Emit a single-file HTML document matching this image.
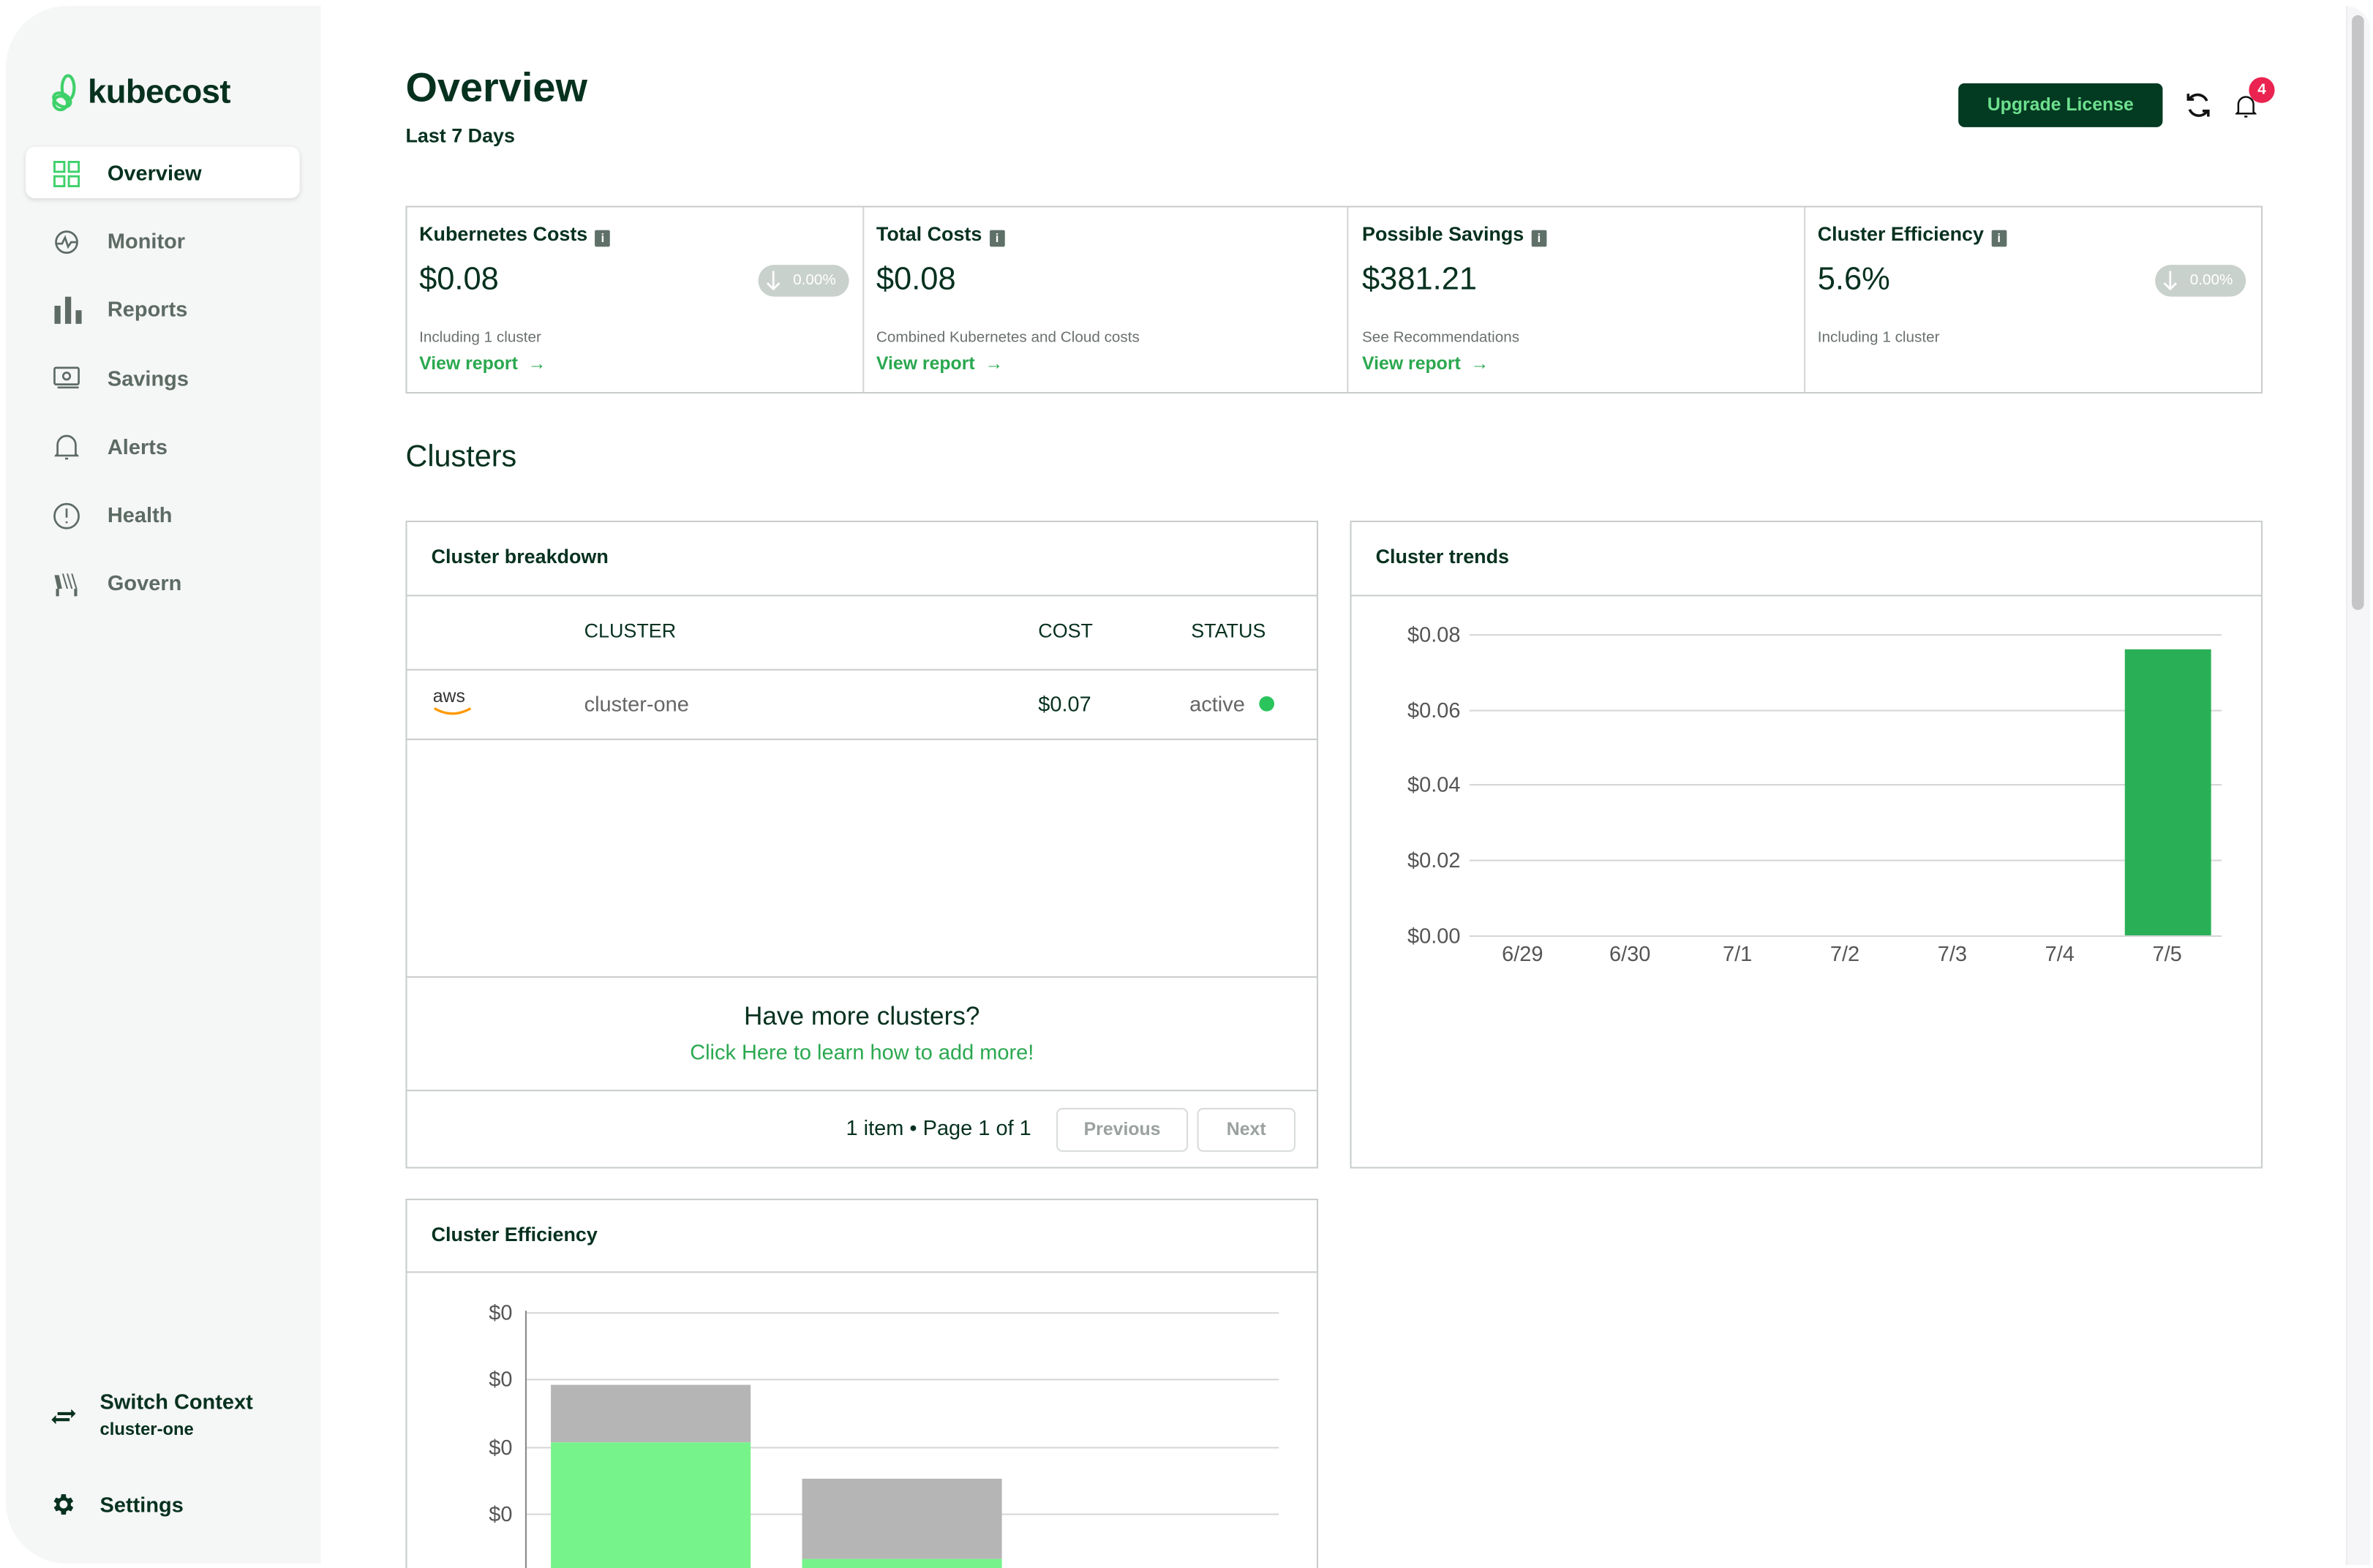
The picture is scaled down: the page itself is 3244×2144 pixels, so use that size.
<!DOCTYPE html>
<html><head><meta charset="utf-8">
<style>
*{margin:0;padding:0;box-sizing:border-box}
html,body{width:3244px;height:2144px;overflow:hidden;background:#fff}
#s{position:absolute;left:0;top:0;width:1568px;height:1036px;overflow:hidden;transform:scale(2.0689,2.0695);transform-origin:0 0;font-family:"Liberation Sans",sans-serif;color:#06311f}
.a{position:absolute;white-space:nowrap}
.sb{left:4px;top:4px;width:208px;height:1029px;background:#f5f6f6;border-radius:40px 0 0 40px}
.nav{font-size:14px;font-weight:bold;color:#5d6b64}
.b{border:1px solid #c9cdcb}
.ct{font-size:13px;font-weight:bold}
.val{font-size:21px}
.sub{font-size:10px;color:#6a716d}
.vr{font-size:12px;font-weight:bold;color:#2aa84f}
.pill{height:21px;width:60px;border-radius:11px;background:#c9d1cd;color:#fff;font-size:10px;line-height:21px;padding-left:23px}
.info{display:inline-block;width:10px;height:11px;background:#5f7068;color:#fff;font-size:8px;line-height:11px;text-align:center;vertical-align:-1px;margin-left:5px;border-radius:1px}
.yl{font-size:14px;color:#555;text-align:right;width:45px}
.xl{font-size:14px;color:#555;text-align:center;width:40px}
.g{height:1px;background:#d6d6d6}
</style></head><body><div id="s">
<div class="a sb"></div>
<div class="a" style="left:1550px;top:4px;width:16px;height:1030px;background:#f6f6f8;border-left:1px solid #ececee;border-radius:0 30px 0 0"></div>
<div class="a" style="left:1554px;top:10px;width:8px;height:393px;background:#c5c5c7;border-radius:4px"></div>
<svg class="a" style="left:33px;top:49px" width="20" height="26" viewBox="0 0 20 26"><g fill="none" stroke="#3ed16a" stroke-width="2"><ellipse cx="12" cy="9" rx="4" ry="8"/><ellipse cx="8" cy="17" rx="6" ry="4" transform="rotate(30 8 17)"/><circle cx="7" cy="19" r="4.5"/></g></svg>
<div class="a" style="left:58px;top:48px;font-size:22px;font-weight:bold;color:#06311f;letter-spacing:-0.3px">kubecost</div>
<div class="a" style="left:17px;top:97px;width:181px;height:34px;background:#fff;border-radius:6px;box-shadow:0 1px 3px rgba(0,0,0,.12)"></div>
<svg class="a" style="left:35px;top:106px" width="18" height="18" viewBox="0 0 18 18" fill="none" stroke="#3ed16a" stroke-width="1.4"><rect x="1" y="1" width="6.5" height="6.5"/><rect x="10.5" y="1" width="6.5" height="6.5"/><rect x="1" y="10.5" width="6.5" height="6.5"/><rect x="10.5" y="10.5" width="6.5" height="6.5"/></svg>
<div class="a nav" style="left:71px;top:106px;color:#06311f">Overview</div>
<svg class="a" style="left:36px;top:152px" width="16" height="16" viewBox="0 0 16 16" fill="none" stroke="#5d6b64" stroke-width="1.3"><circle cx="8" cy="8" r="7"/><path d="M1 9h4l2-4 2 6 2-3h4"/></svg>
<div class="a nav" style="left:71px;top:151px">Monitor</div>
<svg class="a" style="left:36px;top:196px" width="18" height="18" viewBox="0 0 18 18" fill="#5d6b64"><rect x="0" y="6" width="4" height="12"/><rect x="7" y="0" width="4" height="18"/><rect x="14" y="9" width="4" height="9"/></svg>
<div class="a nav" style="left:71px;top:196px">Reports</div>
<svg class="a" style="left:35px;top:242px" width="18" height="15" viewBox="0 0 18 15" fill="none" stroke="#5d6b64" stroke-width="1.3"><rect x="1" y="1" width="16" height="11" rx="1"/><circle cx="9" cy="6.5" r="2.3"/><path d="M3 14h14"/></svg>
<div class="a nav" style="left:71px;top:242px">Savings</div>
<svg class="a" style="left:36px;top:286px" width="16" height="19" viewBox="0 0 16 19" fill="none" stroke="#5d6b64" stroke-width="1.3"><path d="M2 14V8a6 6 0 0 1 12 0v6l1 1H1z"/><path d="M7 17h2"/></svg>
<div class="a nav" style="left:71px;top:287px">Alerts</div>
<svg class="a" style="left:35px;top:332px" width="18" height="18" viewBox="0 0 18 18" fill="none" stroke="#5d6b64" stroke-width="1.3"><circle cx="9" cy="9" r="8"/><path d="M9 4v6M9 12.5v1.2"/></svg>
<div class="a nav" style="left:71px;top:332px">Health</div>
<svg class="a" style="left:36px;top:378px" width="17" height="16" viewBox="0 0 17 16" fill="#5d6b64"><path d="M0 2h3l2 9H2zM5 1l3 10h1L6 1zM8 1l3 10h1L9 1zM11 1l3 10h1L12 1z"/><rect x="1" y="11" width="2" height="5"/><rect x="13" y="11" width="2" height="5"/></svg>
<div class="a nav" style="left:71px;top:377px">Govern</div>
<svg class="a" style="left:33px;top:929px" width="18" height="14" viewBox="0 0 18 14" fill="#06311f"><path d="M5 4h9V2l3 3-3 3V6H5z"/><path d="M13 10H4v2L1 9l3-3v2h9z"/></svg>
<div class="a" style="left:66px;top:918px;font-size:14px;font-weight:bold">Switch Context</div>
<div class="a" style="left:66px;top:939px;font-size:11.5px;font-weight:bold">cluster-one</div>
<svg class="a" style="left:33px;top:985px" width="18" height="18" viewBox="0 0 24 24" fill="#06311f"><path d="M19.4 13a7.5 7.5 0 0 0 0-2l2.1-1.6-2-3.5-2.5 1a7.5 7.5 0 0 0-1.7-1L15 3h-4l-.4 2.9a7.5 7.5 0 0 0-1.7 1l-2.5-1-2 3.5L6.6 11a7.5 7.5 0 0 0 0 2l-2.1 1.6 2 3.5 2.5-1a7.5 7.5 0 0 0 1.7 1L11 21h4l.4-2.9a7.5 7.5 0 0 0 1.7-1l2.5 1 2-3.5zM13 15.5a3.5 3.5 0 1 1 0-7 3.5 3.5 0 0 1 0 7z" transform="translate(-1 0)"/></svg>
<div class="a" style="left:66px;top:986px;font-size:14px;font-weight:bold">Settings</div>
<div class="a" style="left:268px;top:43px;font-size:27px;font-weight:bold;color:#06311f">Overview</div>
<div class="a" style="left:268px;top:82px;font-size:13px;font-weight:bold">Last 7 Days</div>
<div class="a" style="left:1294px;top:55px;width:135px;height:29px;background:#023a22;border-radius:4px;color:#6ee08e;font-size:12px;font-weight:bold;text-align:center;line-height:29px">Upgrade License</div>
<svg class="a" style="left:1443px;top:60px" width="19" height="19" viewBox="0 0 20 20" fill="none" stroke="#111" stroke-width="1.8"><path d="M16 7a7 7 0 0 0-12-1.5"/><path d="M4 13a7 7 0 0 0 12 1.5"/><path d="M3 2v4h4M17 18v-4h-4"/></svg>
<svg class="a" style="left:1477px;top:61px" width="14" height="17" viewBox="0 0 14 17" fill="none" stroke="#111" stroke-width="1.2"><path d="M2 13V8a5 5 0 0 1 10 0v5l1 1H1z"/><path d="M6 16h2"/></svg>
<div class="a" style="left:1486px;top:51px;width:17px;height:17px;border-radius:50%;background:#ea2350;color:#fff;font-size:10px;font-weight:bold;text-align:center;line-height:17px">4</div>
<div class="a b" style="left:268px;top:136px;width:1227px;height:124px"></div>
<div class="a" style="left:570px;top:137px;width:1px;height:122px;background:#d3d6d4"></div>
<div class="a" style="left:890px;top:137px;width:1px;height:122px;background:#d3d6d4"></div>
<div class="a" style="left:1192px;top:137px;width:1px;height:122px;background:#d3d6d4"></div>
<div class="a ct" style="left:277px;top:147px">Kubernetes Costs<span class="info">i</span></div>
<div class="a val" style="left:277px;top:173px">$0.08</div>
<div class="a pill" style="left:501px;top:175px">0.00%</div>
<svg class="a" style="left:506px;top:179px" width="10" height="13" viewBox="0 0 10 13" fill="none" stroke="#fff" stroke-width="1.3"><path d="M5 0v12M1 8l4 4 4-4"/></svg>
<div class="a sub" style="left:277px;top:218px">Including 1 cluster</div>
<div class="a vr" style="left:277px;top:233px">View report &nbsp;→</div>
<div class="a ct" style="left:579px;top:147px">Total Costs<span class="info">i</span></div>
<div class="a val" style="left:579px;top:173px">$0.08</div>
<div class="a sub" style="left:579px;top:218px">Combined Kubernetes and Cloud costs</div>
<div class="a vr" style="left:579px;top:233px">View report &nbsp;→</div>
<div class="a ct" style="left:900px;top:147px">Possible Savings<span class="info">i</span></div>
<div class="a val" style="left:900px;top:173px">$381.21</div>
<div class="a sub" style="left:900px;top:218px">See Recommendations</div>
<div class="a vr" style="left:900px;top:233px">View report &nbsp;→</div>
<div class="a ct" style="left:1201px;top:147px">Cluster Efficiency<span class="info">i</span></div>
<div class="a val" style="left:1201px;top:173px">5.6%</div>
<div class="a pill" style="left:1424px;top:175px">0.00%</div>
<svg class="a" style="left:1429px;top:179px" width="10" height="13" viewBox="0 0 10 13" fill="none" stroke="#fff" stroke-width="1.3"><path d="M5 0v12M1 8l4 4 4-4"/></svg>
<div class="a sub" style="left:1201px;top:218px">Including 1 cluster</div>
<div class="a" style="left:268px;top:291px;font-size:20px">Clusters</div>
<div class="a b" style="left:268px;top:344px;width:603px;height:428px"></div>
<div class="a ct" style="left:285px;top:360px">Cluster breakdown</div>
<div class="a" style="left:269px;top:393px;width:601px;height:1px;background:#c9cdcb"></div>
<div class="a" style="left:386px;top:409px;font-size:13px">CLUSTER</div>
<div class="a" style="left:686px;top:409px;font-size:13px">COST</div>
<div class="a" style="left:787px;top:409px;font-size:13px">STATUS</div>
<div class="a" style="left:269px;top:442px;width:601px;height:1px;background:#c9cdcb"></div>
<div class="a" style="left:286px;top:453px;font-size:12px;color:#333">aws</div>
<svg class="a" style="left:286px;top:467px" width="28" height="7" viewBox="0 0 28 7"><path d="M1 1q12 7 24 0" fill="none" stroke="#f90" stroke-width="1.6"/></svg>
<div class="a" style="left:386px;top:457px;font-size:14px;color:#666">cluster-one</div>
<div class="a" style="left:686px;top:457px;font-size:14px">$0.07</div>
<div class="a" style="left:786px;top:457px;font-size:14px;color:#666">active</div>
<div class="a" style="left:832px;top:460px;width:10px;height:10px;border-radius:50%;background:#2bc45c"></div>
<div class="a" style="left:269px;top:488px;width:601px;height:1px;background:#c9cdcb"></div>
<div class="a" style="left:269px;top:645px;width:601px;height:1px;background:#c9cdcb"></div>
<div class="a" style="left:268px;top:662px;width:603px;text-align:center;font-size:17px">Have more clusters?</div>
<div class="a" style="left:268px;top:687px;width:603px;text-align:center;font-size:14px;color:#2aa84f">Click Here to learn how to add more!</div>
<div class="a" style="left:269px;top:720px;width:601px;height:1px;background:#c9cdcb"></div>
<div class="a" style="left:559px;top:737px;font-size:14px">1 item • Page 1 of 1</div>
<div class="a" style="left:698px;top:732px;width:87px;height:29px;border:1px solid #d8dcda;border-radius:4px;font-size:12px;font-weight:bold;color:#9aa19e;text-align:center;line-height:27px">Previous</div>
<div class="a" style="left:791px;top:732px;width:65px;height:29px;border:1px solid #d8dcda;border-radius:4px;font-size:12px;font-weight:bold;color:#9aa19e;text-align:center;line-height:27px">Next</div>
<div class="a b" style="left:892px;top:344px;width:603px;height:428px"></div>
<div class="a ct" style="left:909px;top:360px">Cluster trends</div>
<div class="a" style="left:893px;top:393px;width:601px;height:1px;background:#c9cdcb"></div>
<div class="a g" style="left:971px;top:419px;width:497px"></div>
<div class="a g" style="left:971px;top:469px;width:497px"></div>
<div class="a g" style="left:971px;top:518px;width:497px"></div>
<div class="a g" style="left:971px;top:568px;width:497px"></div>
<div class="a g" style="left:971px;top:618px;width:497px"></div>
<div class="a yl" style="left:920px;top:411px">$0.08</div>
<div class="a yl" style="left:920px;top:461px">$0.06</div>
<div class="a yl" style="left:920px;top:510px">$0.04</div>
<div class="a yl" style="left:920px;top:560px">$0.02</div>
<div class="a yl" style="left:920px;top:610px">$0.00</div>
<div class="a" style="left:1404px;top:429px;width:57px;height:189px;background:#29b056"></div>
<div class="a xl" style="left:986px;top:622px">6/29</div>
<div class="a xl" style="left:1057px;top:622px">6/30</div>
<div class="a xl" style="left:1128px;top:622px">7/1</div>
<div class="a xl" style="left:1199px;top:622px">7/2</div>
<div class="a xl" style="left:1270px;top:622px">7/3</div>
<div class="a xl" style="left:1341px;top:622px">7/4</div>
<div class="a xl" style="left:1412px;top:622px">7/5</div>
<div class="a b" style="left:268px;top:792px;width:603px;height:244px;border-bottom:none"></div>
<div class="a ct" style="left:285px;top:808px">Cluster Efficiency</div>
<div class="a" style="left:269px;top:840px;width:601px;height:1px;background:#c9cdcb"></div>
<div class="a g" style="left:347px;top:867px;width:498px"></div>
<div class="a g" style="left:347px;top:911px;width:498px"></div>
<div class="a g" style="left:347px;top:956px;width:498px"></div>
<div class="a g" style="left:347px;top:1000px;width:498px"></div>
<div class="a" style="left:347px;top:866px;width:1px;height:170px;background:#888"></div>
<div class="a" style="left:323px;top:859px;font-size:14px;color:#555">$0</div>
<div class="a" style="left:323px;top:903px;font-size:14px;color:#555">$0</div>
<div class="a" style="left:323px;top:948px;font-size:14px;color:#555">$0</div>
<div class="a" style="left:323px;top:992px;font-size:14px;color:#555">$0</div>
<div class="a" style="left:364px;top:915px;width:132px;height:38px;background:#b5b5b5"></div>
<div class="a" style="left:364px;top:953px;width:132px;height:83px;background:#77f38b"></div>
<div class="a" style="left:530px;top:977px;width:132px;height:53px;background:#b5b5b5"></div>
<div class="a" style="left:530px;top:1030px;width:132px;height:6px;background:#77f38b"></div>
</div></body></html>
